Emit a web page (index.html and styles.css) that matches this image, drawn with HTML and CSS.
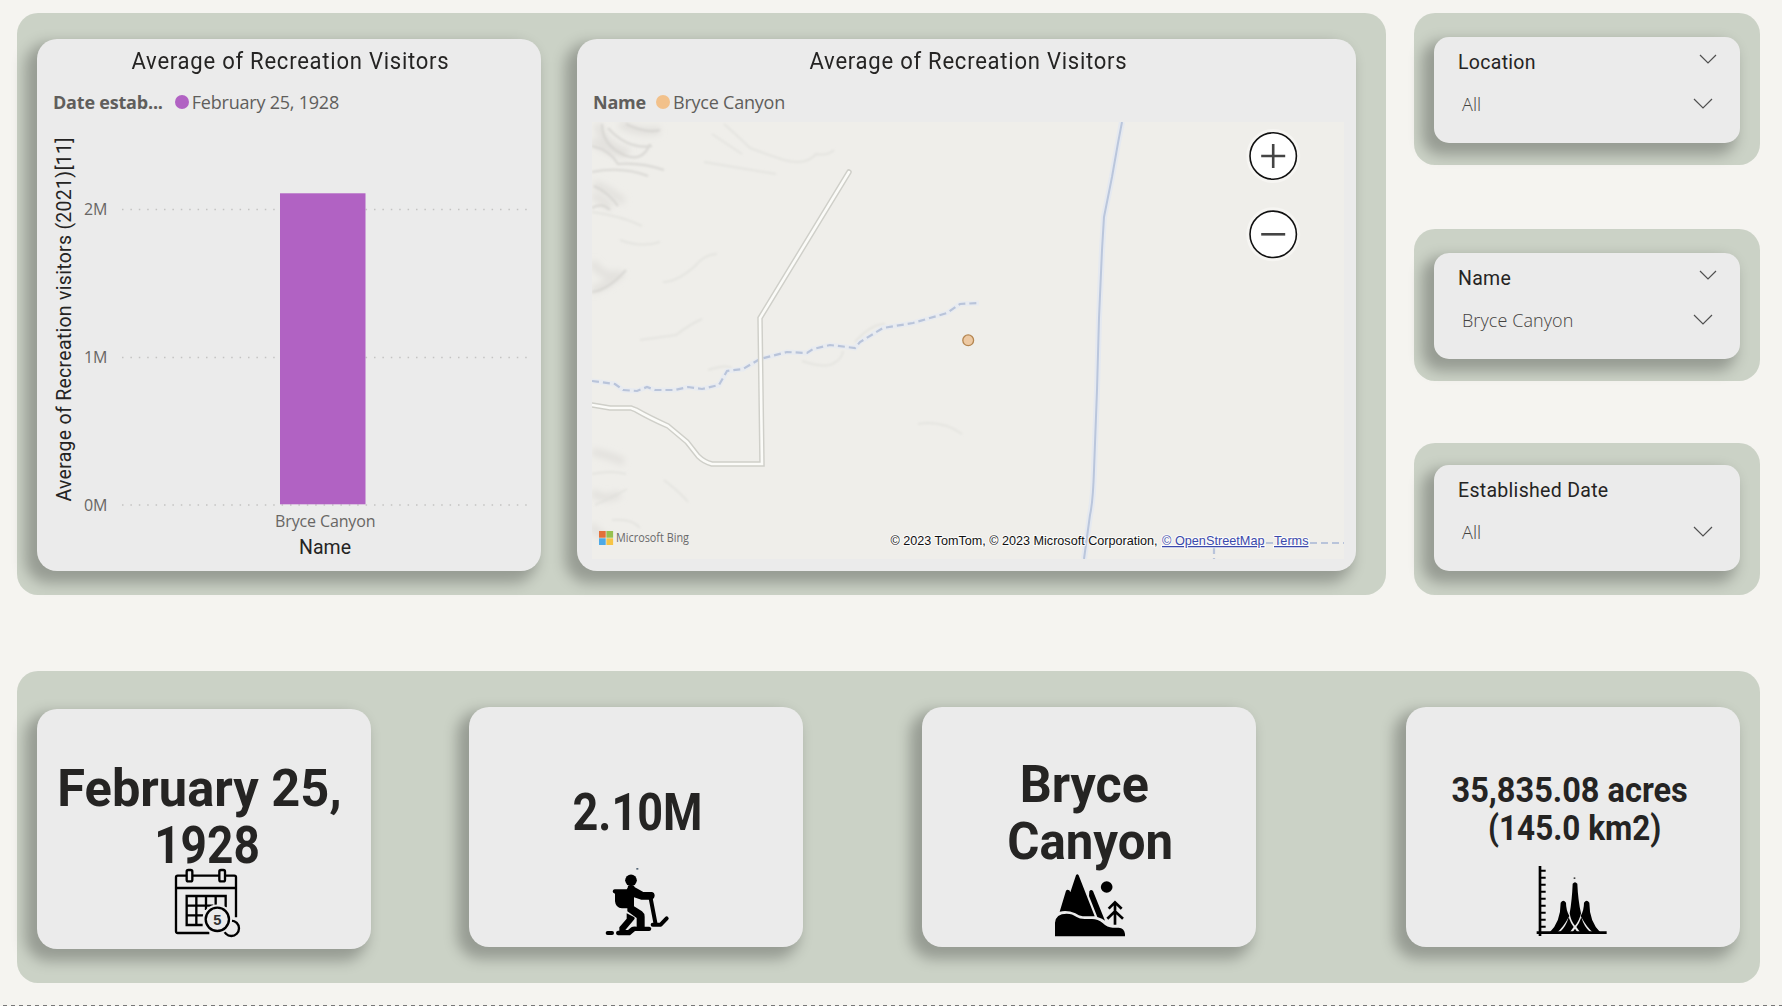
FILE: index.html
```
<!DOCTYPE html>
<html lang="en">
<head>
<meta charset="utf-8">
<title>National Parks</title>
<link rel="stylesheet" href="styles.css">
</head>
<body>
<main class="page">
  <div class="top">
    <section class="panel visuals">
      <article class="card chart-card">
        <h2 class="title"><span>Average of Recreation Visitors</span></h2>
        <div class="legend"><b>Date estab...</b><i class="dot purple"></i><span>February 25, 1928</span></div>
        <svg class="chart" viewBox="37 122 504 449" width="504" height="449">
          <g class="grid">
            <line x1="122" x2="527" y1="209.5" y2="209.5"/>
            <line x1="122" x2="527" y1="357.5" y2="357.5"/>
            <line x1="122" x2="527" y1="505" y2="505"/>
          </g>
          <rect class="bar" x="280" y="193.3" width="85.5" height="311"/>
          <g class="tick">
            <text x="107.5" y="214.7" text-anchor="end">2M</text>
            <text x="107.5" y="362.7" text-anchor="end">1M</text>
            <text x="107.5" y="510.5" text-anchor="end">0M</text>
            <text x="325.3" y="527" text-anchor="middle" textLength="100.5">Bryce Canyon</text>
          </g>
          <g class="axis-title">
            <text x="325" y="554" text-anchor="middle">Name</text>
            <text transform="translate(71 501.5) rotate(-90)" textLength="364">Average of Recreation visitors (2021)[11]</text>
          </g>
        </svg>
      </article>

      <article class="card map-card">
        <h2 class="title"><span>Average of Recreation Visitors</span></h2>
        <div class="legend"><b>Name</b><i class="dot orange"></i><span>Bryce Canyon</span></div>
        <svg class="map" viewBox="592 122 752 437" width="752" height="437">
          <defs>
            <filter id="soft" x="-20%" y="-20%" width="140%" height="140%"><feGaussianBlur stdDeviation="3"/></filter>
            <filter id="fine" x="-20%" y="-20%" width="140%" height="140%"><feGaussianBlur stdDeviation="1.1"/></filter>
          </defs>
          <rect x="592" y="122" width="752" height="437" fill="#efeeea"/>
          <g class="relief-wide" filter="url(#soft)">
            <path d="M597 124q8 24 32 28M592 140q14 12 34 14M620 124q18 10 40 6M594 184q16 6 30 18M592 196q14 4 18 12M592 262q12 18 28 12M592 290q16-4 30-18M592 452q14 2 32 10M592 492q12 10 28 2M592 525q8 14 14 8"/>
          </g>
          <g class="relief" filter="url(#fine)">
            <path d="M602 124q0 20 20 30t28-10M608 128q20 22 44 18M626 124q20 10 34 6M592 146q18 4 26 18q22-2 46 6M592 172q30-6 56 4M594 186q14 6 24 20M592 208q10-6 18 2M592 292q16-2 34-22"/>
          </g>
          <g class="relief-faint" filter="url(#fine)">
            <path d="M724 124q16 14 26 24q16 6 34 12q22 6 32-6q12 2 18-4M712 134l30 20M704 162l72 12M663 282q14 0 32-16q10-12 22-12M592 212q30 4 50 14M620 240q20 8 40 2M640 340q28-4 36-5q16-12 26-16M802 361q24 8 32 2q8-4 9-12M855 342q16-18 30-18M708 370q18-6 24-2M918 424q24-4 44 10M592 474q20-4 34 0M595 505q18-8 32-16M664 480q18 14 24 22M612 520q20-2 28 8"/>
          </g>
          <path class="river-glow" d="M1122 122L1118 143L1112 177L1104 217L1102 250L1099 318L1097 390L1094 470Q1093 502 1090 515L1084 559"/>
          <path class="river" d="M1122 122L1118 143L1112 177L1104 217L1102 250L1099 318L1097 390L1094 470Q1093 502 1090 515L1084 559"/>
          <g class="stream">
            <path class="stream-glow" d="M592 381L615 384L623 390L637 391L647 387L655 390L675 390L688 387L702 389L719 385L727 371L743 369L760 359L787 352L807 353L813 349L830 345L855 348L860 342L883 328L913 323L947 313L960 304L979 303"/>
            <path d="M592 381L615 384L623 390L637 391L647 387L655 390L675 390L688 387L702 389L719 385L727 371L743 369L760 359L787 352L807 353L813 349L830 345L855 348L860 342L883 328L913 323L947 313L960 304L979 303"/>
            <path d="M1266 543H1344M1214 547V559"/>
          </g>
          <path class="road-edge" d="M849 172L760 318L762 464H712Q704 462 698 456L687 442L668 426Q650 418 636 410L631 408H610L592 405"/>
          <path class="road" d="M849 172L760 318L762 464H712Q704 462 698 456L687 442L668 426Q650 418 636 410L631 408H610L592 405"/>
          <circle cx="968.2" cy="340.3" r="5.4" fill="#edc9a3" stroke="#b58650" stroke-width="1.3"/>
          <g class="zoom-button">
            <circle class="halo" cx="1273.2" cy="156" r="27"/>
            <circle class="ring" cx="1273.2" cy="156" r="23.2"/>
            <path d="M1261.2 156h24M1273.2 144v24"/>
            <circle class="halo" cx="1273.2" cy="234.3" r="27"/>
            <circle class="ring" cx="1273.2" cy="234.3" r="23.2"/>
            <path d="M1261.2 234.3h24"/>
          </g>
          <rect x="599" y="531" width="6.7" height="6.7" fill="#e2703a"/>
          <rect x="606.4" y="531" width="6.7" height="6.7" fill="#97c14f"/>
          <rect x="599" y="538.3" width="6.7" height="6.7" fill="#4eaae6"/>
          <rect x="606.4" y="538.3" width="6.7" height="6.7" fill="#f6c445"/>
          <text class="bing" x="616" y="542" textLength="73" lengthAdjust="spacingAndGlyphs">Microsoft Bing</text>
          <g class="credit">
            <text x="890.5" y="545" textLength="267" lengthAdjust="spacingAndGlyphs">© 2023 TomTom, © 2023 Microsoft Corporation,</text>
            <g class="link">
              <text x="1162" y="545" textLength="102.5" lengthAdjust="spacingAndGlyphs">© OpenStreetMap</text>
              <text x="1274" y="545" textLength="34.5" lengthAdjust="spacingAndGlyphs">Terms</text>
            </g>
          </g>
        </svg>
      </article>
    </section>

    <aside class="filters">
      <section class="panel filter">
        <div class="card slicer">
          <div class="slicer-head"><span>Location</span><svg class="chev" width="18" height="10" viewBox="0 0 18 10"><path d="M1 1l8 8 8-8"/></svg></div>
          <div class="slicer-value"><span>All</span><svg class="chev" width="20" height="11" viewBox="0 0 20 11"><path d="M1 1l9 9 9-9"/></svg></div>
        </div>
      </section>
      <section class="panel filter">
        <div class="card slicer">
          <div class="slicer-head"><span>Name</span><svg class="chev" width="18" height="10" viewBox="0 0 18 10"><path d="M1 1l8 8 8-8"/></svg></div>
          <div class="slicer-value"><span>Bryce Canyon</span><svg class="chev" width="20" height="11" viewBox="0 0 20 11"><path d="M1 1l9 9 9-9"/></svg></div>
        </div>
      </section>
      <section class="panel filter last">
        <div class="card slicer">
          <div class="slicer-head"><span>Established Date</span></div>
          <div class="slicer-value"><span>All</span><svg class="chev" width="20" height="11" viewBox="0 0 20 11"><path d="M1 1l9 9 9-9"/></svg></div>
        </div>
      </section>
    </aside>
  </div>

  <section class="panel facts">
    <article class="card fact fact-date">
      <div class="value"><span class="w-february">February 25,</span><span class="w-year">1928</span></div>
      <svg width="80" height="72" viewBox="492 561 240 216">
        <g fill="none" stroke="#000" stroke-width="7">
          <path d="M708 712V592q0-5-5-5H533q-5 0-5 5V754q0 5 5 5H628M528 624H708"/>
          <path d="M608 735H560V648H677V682M589 648V735M618 648V690M647 648V676M560 677H640M560 706H610"/>
          <g fill="#ebebeb"><rect x="560" y="570" width="17" height="34" rx="5"/><rect x="658" y="570" width="17" height="34" rx="5"/></g>
          <circle cx="694" cy="745" r="23" fill="#ebebeb"/>
          <circle cx="652" cy="718" r="41" stroke="#ebebeb" fill="#ebebeb"/>
          <circle cx="652" cy="718" r="35" fill="#ebebeb"/>
        </g>
        <text class="coin" x="652" y="735" text-anchor="middle">5</text>
      </svg>
    </article>
    <article class="card fact">
      <div class="value"><span class="w-count">2.10M</span></div>
      <svg width="80" height="72" viewBox="438 555 240 216">
        <rect x="559" y="564" width="6" height="5" fill="#567"/>
        <circle cx="543" cy="601" r="17.5"/>
        <path d="M494 628H530Q534 624 534 618H552Q553 622 560 625L580 636H604Q614 637 614 647Q612 658 603 659H574L552 652V679L576 694Q584 700 584 710V740H598Q604 741 604 746Q604 752 598 753H555L540 766H504Q498 765 498 759Q498 753 504 752H508V742L530 716V700L552 711Q556 713 553 718L526 750H534L544 742Q548 739 560 740V714L532 694V685H516Q497 684 495 664V641Q488 640 488 634Q489 628 494 628Z"/>
        <path d="M473 759H486M602 655L617 733M608 734H632L650 715" fill="none" stroke="#000" stroke-width="12" stroke-linecap="round" stroke-linejoin="round"/>
      </svg>
    </article>
    <article class="card fact">
      <div class="value"><span class="w-bryce">Bryce</span><span class="w-canyon">Canyon</span></div>
      <svg width="80" height="72" viewBox="477 555 240 216">
        <path d="M509 695L528 632Q532 627 538 631L541 637L558 586Q562 580 566 586L614 709H578Q566 707 556 700Q532 689 509 695Z"/>
        <path d="M598 634Q603 626 609 633L645 722L636 716L622 711L597 648Z"/>
        <circle cx="650" cy="621" r="17.5"/>
        <path d="M495 769V728Q497 701 530 701Q547 701 560 711Q568 717 584 717H606Q624 717 638 729Q652 743 668 743H686Q703 744 705 762V769Z"/>
        <path d="M675 734V668M656 686L675 667L695 686M652 716L675 694L699 716" fill="none" stroke="#000" stroke-width="8"/>
      </svg>
    </article>
    <article class="card fact fact-area">
      <div class="value"><span class="w-acres">35,835.08 acres</span><span class="w-km">(145.0 km2)</span></div>
      <svg width="80" height="72" viewBox="489 555 240 216">
        <path d="M510 558V768M500 758H710" fill="none" stroke="#000" stroke-width="8"/>
        <path d="M510 572H527M510 593H527M510 614H527M510 635H527M510 656H527M510 677H527M510 698H527M510 719H527M510 740H527" stroke="#000" stroke-width="6"/>
        <rect x="611" y="592" width="5" height="5" fill="#444"/>
        <path d="M538 758Q572 726 572 668Q580 657 588 668Q588 690 598 708Q578 745 560 758Z"/>
        <path d="M692 758Q658 726 658 668Q650 657 642 668Q642 690 632 708Q652 745 670 758Z"/>
        <path d="M608 611Q615 602 622 611Q624 660 633 700Q627 725 615 737Q603 725 599 700Q606 660 608 611Z"/>
        <path d="M596 712Q602 730 611 741L600 756H570Q588 740 596 712ZM634 712Q628 730 619 741L630 756H660Q642 740 634 712ZM615 746L622 756H608Z"/>
      </svg>
    </article>
  </section>
  <div class="page-edge"></div>
</main>
</body>
</html>
```
FILE: styles.css
```
* { box-sizing: border-box; }
body { margin: 0; background: #f5f4f0; }
.page {
  width: 1782px; height: 1006px; overflow: hidden;
  display: flex; flex-direction: column;
  padding: 13px 0 0 17px;
  font-family: "Open Sans", "Noto Sans", sans-serif;
  color: #252423;
}
.top { display: flex; gap: 28px; height: 582px; }
.panel { background: #cbd2c6; border-radius: 21px; }
.card {
  background: #ebebeb; border-radius: 20px;
  box-shadow: -8px 8px 14px 4px rgba(0, 0, 0, .26);
}
.visuals { width: 1369px; display: flex; gap: 36px; padding: 26px 30px 24px 20px; }
.chart-card { width: 504px; }
.map-card { flex: 1; }

.title {
  margin: 0; padding-left: 3px; text-align: center;
  font: 400 23.5px/44px Roboto, sans-serif; letter-spacing: .8px;
}
.title span { display: inline-block; transform: scaleX(.938); }
.legend {
  display: flex; align-items: center; height: 39px; padding: 0 0 2px 16px;
  font-size: 18px; color: #605e5c; white-space: nowrap;
}
.legend b { letter-spacing: -.2px; }
.legend span { letter-spacing: -.22px; }
.dot { width: 14px; height: 14px; border-radius: 50%; margin: 0 3px 0 12px; }
.orange { margin-left: 10px; }
.purple { background: #b162c3; }
.orange { background: #f2c18b; }

.chart, .map { display: block; }
.map { margin-left: 15px; }
.grid line { stroke: #c4c3c2; stroke-width: 1.5; stroke-dasharray: 1.5 6.9; }
.bar { fill: #b162c3; }
.tick { font-size: 16px; fill: #686664; }
.axis-title { font: 400 19.5px Roboto, sans-serif; fill: #252423; }

.relief-wide path { fill: none; stroke: #dad9d5; stroke-width: 8; opacity: .6; }
.relief path { fill: none; stroke: #d4d3cf; stroke-width: 2.2; opacity: .8; }
.relief-faint path { fill: none; stroke: #e0dfdc; stroke-width: 2; opacity: .7; }
.river-glow { fill: none; stroke: #e5e9f0; stroke-width: 6; }
.river { fill: none; stroke: #bac6dc; stroke-width: 2; }
.stream path { fill: none; stroke: #b9c4da; stroke-width: 2.2; stroke-dasharray: 7 4; }
.stream .stream-glow { stroke: #e8ebf0; stroke-width: 5; stroke-dasharray: none; }
.road-edge { fill: none; stroke: #cfcfc9; stroke-width: 5.5; stroke-linecap: round; }
.road { fill: none; stroke: #fbfbf8; stroke-width: 2.6; stroke-linecap: round; }
.zoom-button .halo { fill: #f6f5f2; }
.zoom-button .ring { fill: #fff; stroke: #111; stroke-width: 1.6; }
.zoom-button path { fill: none; stroke: #444; stroke-width: 2.6; }
.bing { font-size: 12.5px; fill: #6a6a6a; }
.credit { font: 12.6px "Liberation Sans", Arial, sans-serif; fill: #111; paint-order: stroke; stroke: rgba(255, 255, 255, .8); stroke-width: 2px; }
.link { fill: #3a49ac; text-decoration: underline; }

.filters { width: 346px; display: flex; flex-direction: column; }
.filter { height: 152px; padding: 24px 20px 22px; margin-bottom: 64px; }
.filter:nth-child(2) { margin-bottom: 62px; }
.filter.last { margin-bottom: 0; padding-top: 22px; }
.slicer { height: 106px; border-radius: 15px; }
.slicer-head {
  display: flex; justify-content: space-between; align-items: center;
  height: 51px; padding: 0 23px 0 24px;
  font: 400 19.5px Roboto, sans-serif; letter-spacing: .3px;
}
.slicer-head .chev { margin-bottom: 7px; }
.slicer-value {
  display: flex; justify-content: space-between; align-items: center;
  height: 31px; padding: 0 27px 0 28px;
  font-size: 18px; font-weight: 300; letter-spacing: .08px; color: #444240;
}
.chev path { fill: none; stroke: #505050; stroke-width: 1.2; }

.facts {
  width: 1743px; height: 312px; margin-top: 76px;
  display: grid; grid-template-columns: 432px 453px 484px 334px;
  padding: 36px 20px 0; align-items: start;
}
.fact { width: 334px; height: 240px; }
.fact-date { margin-top: 2px; }
.fact svg { display: block; margin: 0 auto; }
.value {
  display: flex; flex-direction: column; justify-content: center; align-items: center;
  height: 158px; padding-top: 53px;
  font: 700 52.3px/57px Roboto, sans-serif; white-space: nowrap;
}
.value span { display: block; }
.fact-date .value { padding-top: 57px; }
.fact-area .value { padding-top: 45px; font-size: 34.6px; line-height: 38px; }
.w-february { transform: translateX(-4.5px) scaleX(.967); }
.w-year { transform: translateX(3px) scaleX(.88); }
.w-count { transform: translateX(1px) scaleX(.86); }
.w-bryce { transform: translateX(-5px) scaleX(.96); }
.w-canyon { transform: translateX(1px) scaleX(.94); }
.w-acres { transform: translateX(-3px) scaleX(.94); }
.w-km { transform: translateX(1.5px) scaleX(.91); }
.coin { font: 700 44px "Liberation Sans", Arial, sans-serif; fill: #333; }

.page-edge {
  height: 1px; margin: 22px 0 0 -17px;
  background: repeating-linear-gradient(90deg, transparent 0 3px, #777 3px 7px, transparent 7px 8px);
}
```
